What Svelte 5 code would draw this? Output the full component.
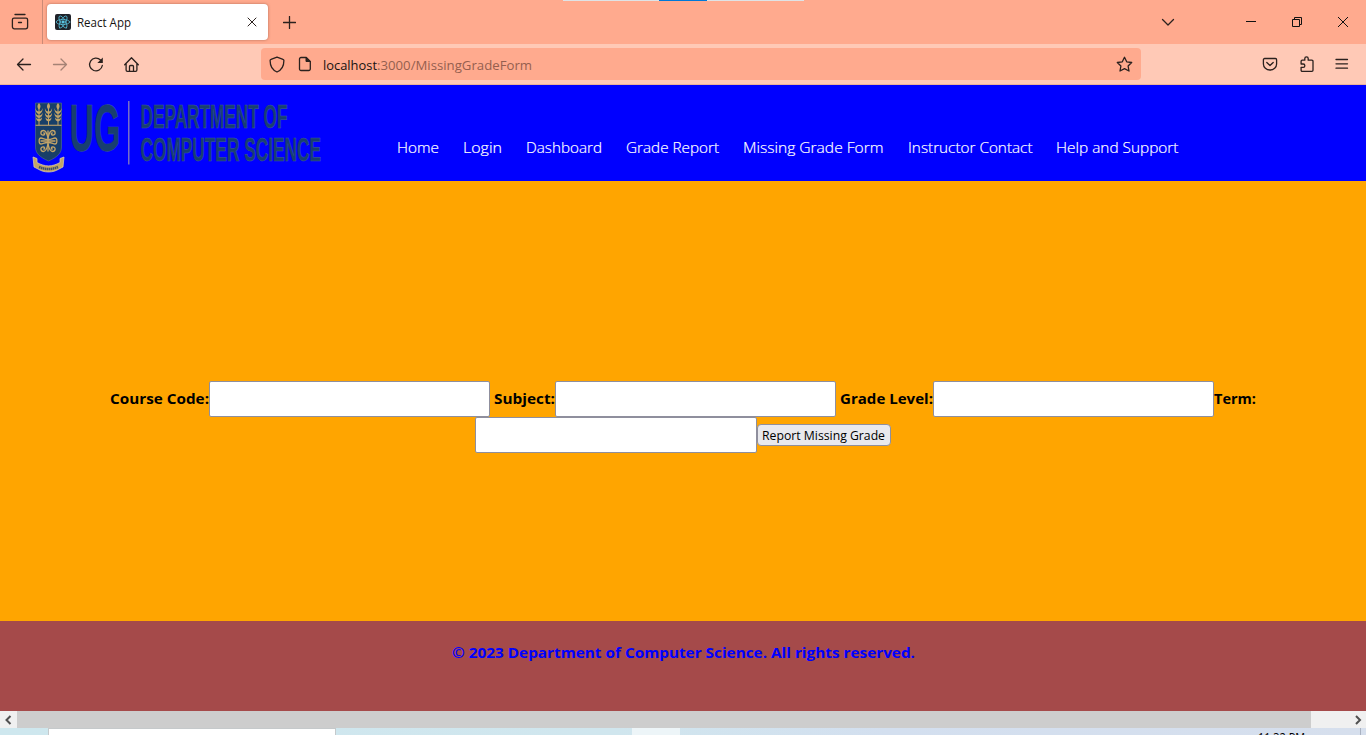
<script>
  const links = [
    { label: 'Home', width: 42 },
    { label: 'Login', width: 39 },
    { label: 'Dashboard', width: 76 },
    { label: 'Grade Report', width: 93 },
    { label: 'Missing Grade Form', width: 140.5 },
    { label: 'Instructor Contact', width: 124.5 },
    { label: 'Help and Support', width: 122.5 }
  ];
  const petals = [0, 60, 120];
  const stalks = [5, 14.5, 24];
</script>

{#snippet fit(label, width, height, baseline, cls)}
  <svg class="fit {cls}" {width} {height}><text x="0" y={baseline} textLength={width} lengthAdjust="spacingAndGlyphs">{label}</text></svg>
{/snippet}

<div class="screen">
  <div class="tabs">
    <div class="peek"><i></i></div>
    <div class="view">
      <svg width="18" height="18" viewBox="0 0 18 18"><path d="M4 1.500h10M3 5.200h12a1.600 1.600 0 0 1 1.600 1.600v7a2 2 0 0 1-2 2H3.400a2 2 0 0 1-2-2v-7A1.600 1.600 0 0 1 3 5.200zM7.500 9.500h3" /></svg>
    </div>
    <div class="tab">
      <svg class="react" width="16" height="16" viewBox="0 0 16 16">
        <rect width="16" height="16" rx="2" fill="#20232a" stroke="none" />
        {#each petals as angle}
          <ellipse cx="8" cy="8" rx="6.800" ry="2.600" transform="rotate({angle} 8 8)" />
        {/each}
        <circle cx="8" cy="8" r="1.200" fill="#61dafb" />
      </svg>
      {@render fit('React App', 54, 18, 14, 'title')}
      <svg class="close" width="10" height="10" viewBox="0 0 10 10"><path d="M1 1l8 8M9 1l-8 8" /></svg>
    </div>
    <svg class="plus" width="13" height="13" viewBox="0 0 13 13"><path d="M6.500 .500v12M.500 6.500h12" /></svg>
    <div class="controls">
      <svg width="14" height="14" viewBox="0 0 14 14"><path d="M1.500 4.500L7 10l5.500-5.500" /></svg>
      <svg class="win" width="12" height="12" viewBox="0 0 12 12"><path d="M1 5.500h10" /></svg>
      <svg class="win" width="12" height="12" viewBox="0 0 12 12"><path d="M1.500 3.500h7v7h-7zM3.500 3V1.500h7v7H9" /></svg>
      <svg class="win" width="12" height="12" viewBox="0 0 12 12"><path d="M1 1l10 10M11 1L1 11" /></svg>
    </div>
  </div>

  <div class="toolbar">
    <div class="buttons">
      <svg width="16" height="16" viewBox="0 0 16 16"><path d="M14.500 8.500H1.500M7 3L1.500 8.500 7 14" /></svg>
      <svg class="dim" width="16" height="16" viewBox="0 0 16 16"><path d="M1.500 8.500h13M9 3l5.500 5.500L9 14" /></svg>
      <svg width="16" height="17" viewBox="0 0 16 17"><path d="M14.300 9.500A6.400 6.400 0 1 1 12.500 4" /><path d="M14.800 1.500V7H9.300z" fill="#2b211e" stroke="none" /></svg>
      <svg width="16" height="17" viewBox="0 0 16 17"><path d="M.700 8.700l6.800-7 6.800 7M2.100 7.500V14a1.300 1.300 0 0 0 1.300 1.300h8.200a1.300 1.300 0 0 0 1.300-1.300V7.500M5.500 15v-4.500a1 1 0 0 1 1-1h2a1 1 0 0 1 1 1V15" /></svg>
    </div>
    <div class="address">
      <svg width="16" height="17" viewBox="0 0 16 17"><path d="M8 1.200l6 2.200c.6.200.9.600.9 1.200C14.900 10 12.300 14.300 8 16 3.700 14.300 1.100 10 1.100 4.600c0-.6.300-1 .9-1.200z" /></svg>
      <svg class="page" width="14" height="16" viewBox="0 0 14 16"><path d="M3 1.500h5.300l4 4V13a1.500 1.500 0 0 1-1.500 1.500H3A1.500 1.500 0 0 1 1.500 13V3A1.500 1.500 0 0 1 3 1.500z" /><path d="M8 1.500v4h4z" fill="#2b211e" stroke-width="1" /></svg>
      {@render fit('localhost', 54, 20, 16, 'host')}
      {@render fit(':3000/MissingGradeForm', 155, 20, 16, 'path')}
      <svg class="star" width="17" height="17" viewBox="0 0 17 17"><path d="M8.500 1.300l2.200 4.500 5 .7-3.600 3.500.9 5-4.500-2.400L4 15l.9-5L1.300 6.500l5-.7z" /></svg>
    </div>
    <div class="tools">
      <svg width="16" height="16" viewBox="0 0 16 16"><path d="M2.600 2.500h10.800a1.200 1.200 0 0 1 1.200 1.200V8a6.600 6 0 0 1-13.200 0V3.700a1.200 1.200 0 0 1 1.200-1.200zM4.800 6.500L8 9.500l3.200-3" /></svg>
      <svg width="16" height="18" viewBox="0 0 16 18"><path d="M2.100 8V6.300a1.100 1.100 0 0 1 1.100-1.100h2.600V3.500a1.700 1.700 0 0 1 3.400 0v1.700h3.700a1.100 1.100 0 0 1 1.100 1.100v9a1.100 1.100 0 0 1-1.100 1.100H3.200a1.100 1.100 0 0 1-1.100-1.100v-3h2.100a1.600 1.600 0 0 0 0-3.300H2.100z" /></svg>
      <svg width="14" height="14" viewBox="0 0 14 14"><path d="M1 2.500h11.500M1 6.800h11.500M1 11.200h11.500" /></svg>
    </div>
  </div>

  <header>
    <svg class="logo" width="300" height="84" viewBox="0 0 300 84">
      <path d="M5.500 11h26v44c0 6-4 10-13 14-9-4-13-8-13-14z" fill="#183f68" stroke="#49698b" stroke-width=".7" />
      <path d="M5.500 33.300h26" stroke="#b69b69" stroke-width="1.200" />
      <g transform="translate(4 0)">
        {#each stalks as x}
          <g transform="translate({x} 11)" fill="#c2a467">
            <path d="M0 0c2.500 3 1.500 5 0 6.500C-1.500 5-2.500 3 0 0zM-3.600 5c.5 2.500 1.800 3.500 3.600 3.500S3.100 7.500 3.600 5c0 4-1.600 5.500-3.600 6-2-.5-3.600-2-3.600-6zM-3.600 9.500c.5 2 1.800 3 3.600 3s3.100-1 3.600-3c0 4-1.600 5-3.600 5.500-2-.5-3.600-1.500-3.600-5.500zM-3 14c.5 1.500 1.500 2 3 2s2.500-.5 3-2c0 3-1.200 4-3 4.500-1.800-.5-3-1.500-3-4.500z" />
            <path d="M-.500 4h1v18h-1z" />
          </g>
        {/each}
      </g>
      <g fill="none" stroke="#c2a467" stroke-width="1.300" stroke-linecap="round">
        <path d="M18 39v20M11 49h14" />
        <path d="M18 46c-1-4-1.500-7.500-4.500-7.500-3.500 0-3.500 5 0 4.500 1.500-.2 1.500-2 .3-2M18 46c1-4 1.500-7.500 4.500-7.500 3.500 0 3.500 5 0 4.500-1.500-.2-1.500-2-.3-2" />
        <path d="M18 52c-1 4-1.500 7.500-4.500 7.500-3.500 0-3.500-5 0-4.500 1.500.2 1.500 2 .3 2M18 52c1 4 1.500 7.500 4.500 7.500 3.500 0 3.500-5 0-4.500-1.500.2-1.500 2-.3 2" />
        <path d="M18 47.500c-4 0-5-1.500-7-1.500-2.500 0-2.500 6 0 6 2 0 3-1.500 7-1.500s5 1.500 7 1.500c2.500 0 2.500-6 0-6-2 0-3 1.500-7 1.500z" />
      </g>
      <path d="M3 65l4 1.500v4c8 4.500 15 4.500 23 0v-4l4-1.500-1 10-4 2c-6 4-15 4-21 0l-4-2z" fill="#c2a467" stroke="#e1d3ac" stroke-width=".7" />
      <path d="M9 75q9.500 4 19 0" fill="none" stroke="#40506a" stroke-width="2.500" stroke-dasharray="1.500 .500" />
      <g class="wordmark">
        <text class="ug" x="39.500" y="58.500" font-size="66" textLength="51" lengthAdjust="spacingAndGlyphs">UG</text>
        <text x="110.500" y="35.500" font-size="33" textLength="147" lengthAdjust="spacingAndGlyphs">DEPARTMENT OF</text>
        <text x="110.500" y="69" font-size="33" textLength="180.500" lengthAdjust="spacingAndGlyphs">COMPUTER SCIENCE</text>
      </g>
      <path d="M98.800 9v63.500" stroke="#8c82bd" stroke-width="1.300" />
    </svg>
    <nav>
      {#each links as link}
        {@render fit(link.label, link.width, 24, 17.5, 'link')}
      {/each}
    </nav>
  </header>

  <main>
    <div class="row first">
      {@render fit('Course Code:', 99, 24, 17, 'label')}
      <div class="input"></div>
      <span class="space"></span>
      {@render fit('Subject:', 61, 24, 17, 'label')}
      <div class="input"></div>
      <span class="space"></span>
      {@render fit('Grade Level:', 93, 24, 17, 'label')}
      <div class="input"></div>
      {@render fit('Term:', 42, 24, 17, 'label')}
    </div>
    <div class="row second">
      <div class="input wide"></div>
      <button>{@render fit('Report Missing Grade', 123, 18, 14, 'action')}</button>
    </div>
  </main>

  <footer>{@render fit('© 2023 Department of Computer Science. All rights reserved.', 463, 24, 17, 'copy')}</footer>

  <div class="scroll">
    <div class="end"><svg width="8" height="10" viewBox="0 0 8 10"><path d="M5.500 1L1.500 5l4 4" /></svg></div>
    <div class="thumb"></div>
    <div class="end right"><svg width="8" height="10" viewBox="0 0 8 10"><path d="M2 1l4 4-4 4" /></svg></div>
  </div>
  <div class="taskbar">
    <div class="search"></div>
    <div class="active"></div>
    {@render fit('11:32 PM', 47, 7, 14, 'clock')}
    <div class="desk"></div>
  </div>
</div>

<style>
  :global(body) { margin: 0; overflow: hidden; }
  .screen { width: 1366px; height: 735px; overflow: hidden; display: flex; flex-direction: column; font-family: "Open Sans", "Noto Sans", sans-serif; }
  svg { display: block; flex: none; }
  .tabs, .toolbar { display: flex; align-items: center; flex: none; box-sizing: border-box; }
  .tabs { height: 44px; background: #ffaa8e; position: relative; }
  .tabs svg, .toolbar svg { fill: none; stroke: #2b211e; stroke-width: 1.3; stroke-linejoin: round; stroke-linecap: round; }
  .peek { position: absolute; top: 0; left: 563px; width: 241px; height: 1px; background: #dfe3e6; }
  .peek i { display: block; width: 48px; height: 1px; margin-left: 96px; background: #0078d7; }
  .view { width: 43px; height: 44px; padding-left: 11px; box-sizing: border-box; border-right: 1px solid #cb8a76; display: flex; align-items: center; }
  .tab { width: 221px; height: 36px; margin-left: 4px; padding: 0 11px 0 8px; box-sizing: border-box; border-radius: 4px; background: #fff; box-shadow: 0 0 3px #8b4b37aa; display: flex; align-items: center; }
  .tabs .react { stroke: #55bdd8; stroke-width: .8; }
  .fit { overflow: visible; }
  .tabs .title, .toolbar .fit { stroke: none; fill: #171310; }
  .title { margin-left: 6px; font-size: 12px; }
  .tabs .close { margin-left: auto; stroke-width: 1; }
  .tabs .plus { margin-left: 15px; }
  .controls { margin-left: auto; display: flex; align-items: center; padding-right: 17px; }
  .controls svg + svg { margin-left: 34px; }
  .controls svg:first-child + svg { margin-left: 70px; }
  .tabs .win { stroke-width: 1; stroke: #111; stroke-linecap: butt; stroke-linejoin: miter; }
  .toolbar { height: 41px; background: #ffc9b6; border-bottom: 1px solid #e9b19b; }
  .buttons { width: 261px; display: flex; align-items: center; gap: 20px; padding-left: 16px; box-sizing: border-box; }
  .toolbar .dim { opacity: .42; }
  .address { width: 880px; height: 32px; background: #ffaa8e; border-radius: 4px; display: flex; align-items: center; padding: 0 8px; box-sizing: border-box; }
  .page { margin-left: 13px; margin-right: 11px; }
  .host, .path { font-size: 13px; font-weight: 400; }
  .toolbar .path { fill: #955f4f; }
  .star { margin-left: auto; }
  .tools { display: flex; align-items: center; gap: 21px; margin-left: 121px; }
  .tools svg:last-child { margin-left: -1px; }
  header { height: 96px; background: #00f; flex: none; display: flex; }
  .logo { margin: 7px 0 0 30px; }
  .wordmark { font-family: "Liberation Sans", sans-serif; font-weight: 700; fill: #183f70; stroke: #3e5c99; stroke-width: .5; }
  .ug { stroke-width: .3; }
  nav { display: flex; gap: 24px; margin: 50px 0 0 67px; }
  .link { fill: #fff; stroke: #fff; stroke-width: .2; font-size: 15px; font-weight: 300; }
  main { height: 440px; background: #ffa500; flex: none; box-sizing: border-box; padding-top: 200px; }
  .row { height: 36px; display: flex; align-items: center; }
  .first { padding-left: 110px; }
  .second { padding-left: 475px; }
  .label { font-size: 14.500px; font-weight: 700; }
  .input { width: 281px; height: 36px; box-sizing: border-box; border: 1px solid #8f8f9d; border-radius: 2px; background: #fff; flex: none; }
  .wide { width: 282px; }
  .space { width: 4px; }
  button { width: 134px; height: 22px; padding: 0 4px; border: 1px solid #8f8f9d; border-radius: 4px; background: #e9e9ed; display: flex; align-items: center; font-family: inherit; }
  .action { font-size: 12.500px; }
  footer { height: 90px; flex: none; background: #a54a4a; display: flex; justify-content: center; padding-top: 20px; box-sizing: border-box; }
  .copy { fill: #00f; font-size: 14.500px; font-weight: 700; }
  .scroll { height: 17px; flex: none; display: flex; background: #f0f0f0; }
  .end { width: 17px; display: flex; align-items: center; justify-content: center; }
  .end svg { fill: none; stroke: #505050; stroke-width: 2; }
  .thumb { width: 1294px; background: #cdcdcd; }
  .right { margin-left: auto; }
  .taskbar { height: 7px; flex: none; display: flex; background: linear-gradient(90deg, #cee7ee, #d0e6ee 45%, #d3dfef 65%, #d6dfed); }
  .search { width: 286px; height: 6px; margin-left: 48px; background: #fff; border: 1px solid #c5c9cb; border-bottom: 0; }
  .active { width: 48px; margin-left: 296px; background: #edf5f8; }
  .clock { margin-left: 578px; font-size: 12px; overflow: hidden; }
  .desk { width: 1px; margin-left: 55px; background: #a9b2c2; }
</style>
